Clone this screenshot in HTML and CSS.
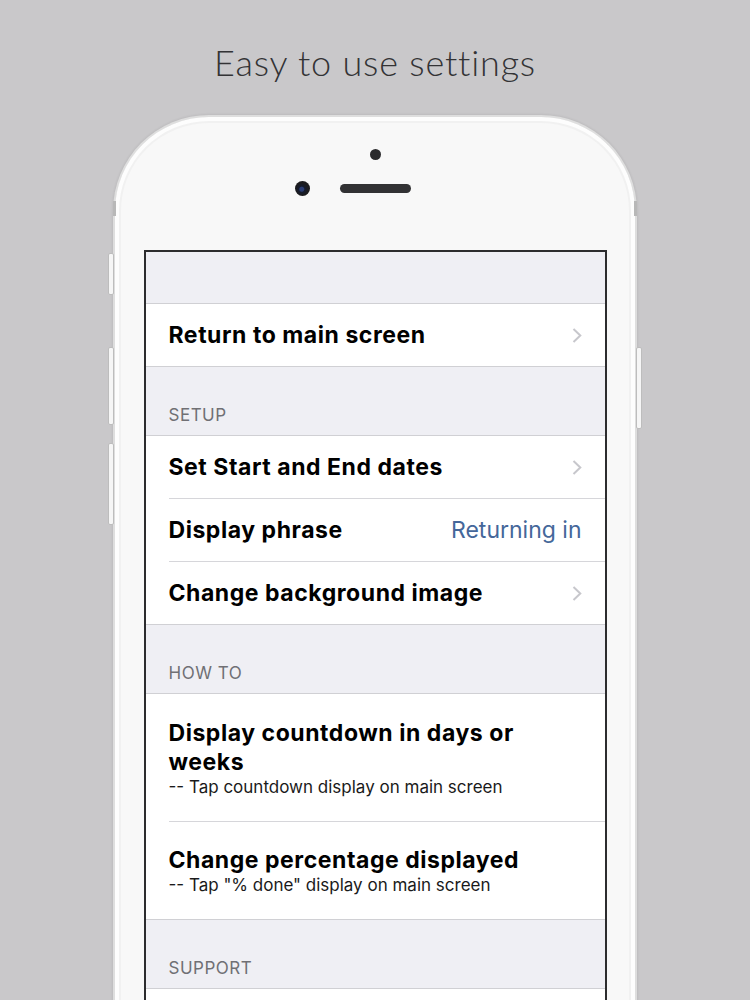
FILE: index.html
```html
<!DOCTYPE html>
<html>
<head>
<meta charset="utf-8">
<link rel="stylesheet" href="styles.css">
</head>
<body>
<h1 class="headline">Easy to use settings</h1>
<div class="phone">
  <span class="btn btn-l1"></span>
  <span class="btn btn-l2"></span>
  <span class="btn btn-l3"></span>
  <span class="btn btn-r1"></span>
  <span class="band band-l"></span>
  <span class="band band-r"></span>
  <div class="bezel">
    <div class="sensor"></div>
    <div class="cam-row">
      <div class="cam-slot"><div class="camera"></div></div>
      <div class="speaker"></div>
      <div></div>
    </div>
  </div>
  <div class="screen">
    <div class="top-space"></div>
    <div class="group">
      <div class="row">
        <span class="label">Return to main screen</span>
        <svg class="chev" viewBox="0 0 10 15" width="10" height="15"><path d="M1.5 1l6.8 6.5L1.5 14" fill="none" stroke="#c7c7cc" stroke-width="2"/></svg>
      </div>
    </div>
    <div class="header">SETUP</div>
    <div class="group">
      <div class="row">
        <span class="label">Set Start and End dates</span>
        <svg class="chev" viewBox="0 0 10 15" width="10" height="15"><path d="M1.5 1l6.8 6.5L1.5 14" fill="none" stroke="#c7c7cc" stroke-width="2"/></svg>
      </div>
      <div class="row">
        <span class="label">Display phrase</span>
        <span class="value">Returning in</span>
      </div>
      <div class="row">
        <span class="label">Change background image</span>
        <svg class="chev" viewBox="0 0 10 15" width="10" height="15"><path d="M1.5 1l6.8 6.5L1.5 14" fill="none" stroke="#c7c7cc" stroke-width="2"/></svg>
      </div>
    </div>
    <div class="header">HOW TO</div>
    <div class="group">
      <div class="row tall">
        <div class="label wrap">Display countdown in days or weeks</div>
        <div class="sub">-- Tap countdown display on main screen</div>
      </div>
      <div class="row tall">
        <div class="label wrap">Change percentage displayed</div>
        <div class="sub">-- Tap "% done" display on main screen</div>
      </div>
    </div>
    <div class="header">SUPPORT</div>
    <div class="group">
      <div class="row"></div>
    </div>
  </div>
</div>
</body>
</html>
```
FILE: styles.css
```css
html, body {
  margin: 0;
  padding: 0;
}
body {
  background: #c9c8ca;
  width: 750px;
  height: 1000px;
  overflow: hidden;
  font-family: Inter, "Noto Sans", sans-serif;
}
.headline {
  margin: 0;
  padding-top: 41px;
  height: 42px;
  line-height: 42px;
  font-family: Lato, sans-serif;
  font-weight: 300;
  font-size: 36px;
  color: #333335;
  text-align: center;
  letter-spacing: 0.8px;
}
.phone {
  position: relative;
  box-sizing: border-box;
  width: 524px;
  height: 940px;
  margin: 32px 0 0 113px;
  background: #f8f8f8;
  border: 2px solid #dedede;
  border-bottom: none;
  border-radius: 96px 96px 0 0;
  box-shadow: 0 0 3px rgba(0,0,0,0.12), inset 0 0 0 4px #fdfdfd, inset 0 0 0 6px #f1f1f1;
}
.btn {
  position: absolute;
  width: 4px;
  background: #f6f6f6;
  border: 1px solid #bdbdbd;
  border-radius: 2px;
}
.btn-l1 { left: -7px; top: 136px; height: 40px; }
.btn-l2 { left: -7px; top: 230px; height: 76px; }
.btn-l3 { left: -7px; top: 326px; height: 80px; }
.btn-r1 { right: -7px; top: 230px; height: 80px; }
.band {
  position: absolute;
  top: 84px;
  width: 3px;
  height: 15px;
  background: #b8b8b8;
}
.band-l { left: -2px; }
.band-r { right: -2px; }
.bezel {
  height: 133px;
  display: flex;
  flex-direction: column;
  align-items: center;
}
.sensor {
  margin-top: 32px;
  width: 11px;
  height: 11px;
  border-radius: 50%;
  background: #2a2a2c;
}
.cam-row {
  margin-top: 21px;
  width: 100%;
  display: grid;
  grid-template-columns: 1fr auto 1fr;
  align-items: center;
}
.cam-slot {
  display: flex;
  justify-content: flex-end;
  padding-right: 30px;
}
.camera {
  width: 15px;
  height: 15px;
  border-radius: 50%;
  background: radial-gradient(circle at 45% 55%, #2b3d73 0 2px, #151c2e 3px, #1c1c1e 6px);
}
.speaker {
  width: 71px;
  height: 9px;
  border-radius: 5px;
  background: #323234;
}
.screen {
  box-sizing: border-box;
  width: 463px;
  height: 800px;
  margin: 0 auto;
  background: #efeff4;
  border: 2px solid #2c2c2e;
  border-bottom: none;
}
.top-space {
  height: 51px;
}
.group {
  background: #fff;
  border-top: 1px solid #d0d0d4;
  border-bottom: 1px solid #d0d0d4;
}
.row {
  box-sizing: border-box;
  height: 62px;
  margin-left: 23px;
  padding-right: 23px;
  display: flex;
  align-items: center;
  justify-content: space-between;
  border-top: 1px solid #d6d6da;
}
.row + .row {
  height: 63px;
}
.row:first-child {
  border-top: none;
}
.label {
  font-size: 23px;
  font-weight: 700;
  color: #000;
  letter-spacing: 0.55px;
}
.value {
  font-size: 23px;
  font-weight: 400;
  color: #45679a;
}
.chev {
  display: block;
}
.row.tall {
  height: auto;
  display: block;
  padding-top: 25px;
  padding-bottom: 24px;
}
.row.tall + .row.tall {
  padding-top: 24px;
  padding-bottom: 24px;
}
.wrap {
  max-width: 375px;
  line-height: 29px;
}
.sub {
  font-size: 17px;
  line-height: 20px;
  color: #1a1a1a;
}
.header {
  box-sizing: border-box;
  height: 68px;
  padding-left: 23px;
  padding-bottom: 10px;
  display: flex;
  align-items: flex-end;
  font-size: 17px;
  color: #707074;
  letter-spacing: 0.5px;
}
```
